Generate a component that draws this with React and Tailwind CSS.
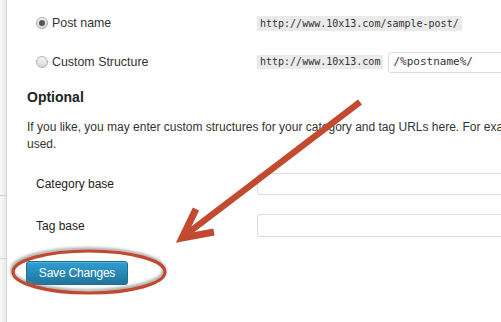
export default function App() {
  return (
    <div className="relative w-[501px] h-[322px] overflow-hidden bg-white flex font-['Liberation_Sans',Arial,sans-serif] text-[12px] text-[#333]">
      {/* left admin edge */}
      <div className="w-[7px] shrink-0 flex flex-col bg-gradient-to-r from-[#f9f9f9] to-[#e9e9e9] border-r border-[#d6d6d6]">
        <div className="h-[195px]" />
        <div className="h-[63px] border-t border-[#cfcfcf]" />
        <div className="flex-1 border-t border-[#d6d6d6]" />
      </div>

      <div className="flex-1 pl-[20px] flex flex-col">
        <div className="h-[46px] flex items-center pl-[9px]">
          <label className="w-[221px] flex items-center gap-[4px] text-[12.4px]">
            <span className="w-[12px] h-[12px] rounded-full border border-[#a9a9a9] bg-gradient-to-b from-[#f4f4f4] to-[#d8d8d8] flex items-center justify-center">
              <span className="w-[6px] h-[6px] rounded-full bg-[#555]" />
            </span>
            <span>Post name</span>
          </label>
          <code className="bg-[#eaeaea] px-[3px] h-[15px] leading-[15px] text-[10px] text-[#333] font-['DejaVu_Sans_Mono',Consolas,monospace]">http://www.10x13.com/sample-post/</code>
        </div>

        <div className="h-[32px] flex items-center pl-[9px]">
          <label className="w-[221px] flex items-center gap-[4px] text-[12.4px]">
            <span className="w-[12px] h-[12px] rounded-full border border-[#b3b3b3] bg-gradient-to-b from-[#f4f4f4] to-[#d8d8d8]" />
            <span>Custom Structure</span>
          </label>
          <code className="bg-[#eaeaea] px-[3px] h-[14px] leading-[14px] text-[10px] text-[#333] font-['DejaVu_Sans_Mono',Consolas,monospace]">http://www.10x13.com</code>
          <div className="ml-[5px] w-[200px] h-[21px] shrink-0 border border-[#dcdcdc] rounded-[3px] pl-[4px] flex items-center text-[11px] font-['DejaVu_Sans_Mono',Consolas,monospace]">/%postname%/</div>
        </div>

        <h3 className="mt-[9px] h-[20px] leading-[20px] text-[14px] font-bold text-[#222]">Optional</h3>

        <p className="mt-[12px] leading-[17px] whitespace-nowrap">
          If you like, you may enter custom structures for your category and tag URLs here. For example, using topics as your category base would make your category links like http://example.org/topics/uncategorized/. If you leave these blank the defaults will be
          <br />
          used.
        </p>

        <div className="mt-[20px] h-[22px] flex items-center pl-[9px]">
          <span className="w-[221px] shrink-0 text-[#222]">Category base</span>
          <div className="w-[300px] h-[22px] shrink-0 border border-[#dcdcdc] rounded-[3px]" />
        </div>

        <div className="mt-[19px] h-[23px] flex items-center pl-[9px]">
          <span className="w-[221px] shrink-0 text-[#222]">Tag base</span>
          <div className="w-[300px] h-[23px] shrink-0 border border-[#dcdcdc] rounded-[3px]" />
        </div>

        <div className="mt-[24px] -ml-[1px]">
          <button className="w-[102px] h-[24px] rounded-[3px] border border-[#1f6f94] bg-gradient-to-b from-[#2e9fd2] to-[#21759b] text-white text-[12px] tracking-[-0.2px] leading-[22px] shadow-[inset_0_1px_0_rgba(120,200,230,0.5)]">
            Save Changes
          </button>
        </div>
      </div>

      {/* annotation overlay */}
      <svg className="absolute inset-0 pointer-events-none" width="501" height="322" viewBox="0 0 501 322">
        <defs>
          <filter id="halo" x="-20%" y="-40%" width="140%" height="180%">
            <feDropShadow dx="-1" dy="-2" stdDeviation="1.6" floodColor="#777" floodOpacity="0.7" />
          </filter>
        </defs>
        <ellipse cx="89" cy="272" rx="76" ry="21" fill="none" stroke="#c0482d" strokeWidth="3.2" filter="url(#halo)" />
        <line x1="360" y1="102" x2="184" y2="236" stroke="#c24a30" strokeWidth="6.5" />
        <polyline points="196,209 182,238 214,232" fill="none" stroke="#c24a30" strokeWidth="7" strokeLinejoin="miter" strokeMiterlimit="10" />
      </svg>
    </div>
  );
}
